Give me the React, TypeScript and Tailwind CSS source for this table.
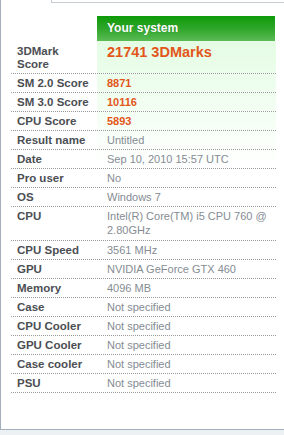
const rows: { label: string; value: React.ReactNode; kind?: "score" | "cpu" }[] = [
  { label: "SM 2.0 Score", value: "8871", kind: "score" },
  { label: "SM 3.0 Score", value: "10116", kind: "score" },
  { label: "CPU Score", value: "5893", kind: "score" },
  { label: "Result name", value: "Untitled" },
  { label: "Date", value: "Sep 10, 2010 15:57 UTC" },
  { label: "Pro user", value: "No" },
  { label: "OS", value: "Windows 7" },
  {
    label: "CPU",
    value: (
      <>
        Intel(R) Core(TM) i5 CPU 760 @
        <br />
        2.80GHz
      </>
    ),
    kind: "cpu",
  },
  { label: "CPU Speed", value: "3561 MHz" },
  { label: "GPU", value: "NVIDIA GeForce GTX 460" },
  { label: "Memory", value: "4096 MB" },
  { label: "Case", value: "Not specified" },
  { label: "CPU Cooler", value: "Not specified" },
  { label: "GPU Cooler", value: "Not specified" },
  { label: "Case cooler", value: "Not specified" },
  { label: "PSU", value: "Not specified" },
];

// value column fades from pale green to white (page never scrolls, so bg-fixed lines up)
const valueBg =
  "bg-fixed bg-[linear-gradient(to_bottom,#e4fce4_41px,#f3fef3_110px,#ffffff_170px)]";

export default function App() {
  return (
    <div className="h-[435px] w-[284px] overflow-hidden bg-[#edf1f4] font-['Liberation_Sans',Arial,sans-serif] text-[11px]">
      <div className="h-[430px] bg-white border-l border-b border-[#a3aebb]">
        <div className="ml-[50px] h-[3px] border-l border-b border-[#c6cdd5]" />

        <div className="ml-[10px] mt-[13px] w-[265px]">
          {/* header */}
          <div className="flex">
            <div className="w-[86px]" />
            <div className="w-[178px] h-[25px] pl-[10px] leading-[25px] text-[12px] font-bold text-white bg-[linear-gradient(to_bottom,#0e9a08,#2ea62a_50%,#5bbb55)] [text-shadow:0_0_1px_rgba(0,60,0,0.4)]">
              Your system
            </div>
          </div>

          {/* overall score */}
          <div className="flex h-[33px] border-b border-dotted border-[#9a9a9a]">
            <div className="w-[86px] pl-[6px] pt-[4px] leading-[13px] text-[11.5px] font-bold text-[#4b4e53]">
              3DMark
              <br />
              Score
            </div>
            <div className={`flex-1 pl-[10px] pt-[2px] leading-[18px] text-[14.5px] font-bold text-[#e2561a] ${valueBg}`}>
              21741 3DMarks
            </div>
          </div>

          {rows.map((r) => (
            <div key={r.label} className="flex border-b border-dotted border-[#9a9a9a]">
              <div
                className={`w-[86px] pl-[6px] text-[11.5px] font-bold text-[#4b4e53] ${
                  r.kind === "cpu" ? "pt-[2px] leading-[14px]" : "leading-[18px]"
                }`}
              >
                {r.label}
              </div>
              <div
                className={`flex-1 pl-[10px] ${valueBg} ${
                  r.kind === "cpu" ? "pt-[2px] pb-[3px] leading-[14px]" : "leading-[18px]"
                } ${r.kind === "score" ? "font-bold text-[#e2561a]" : "text-[#858c94]"}`}
              >
                {r.value}
              </div>
            </div>
          ))}
        </div>
      </div>
    </div>
  );
}
